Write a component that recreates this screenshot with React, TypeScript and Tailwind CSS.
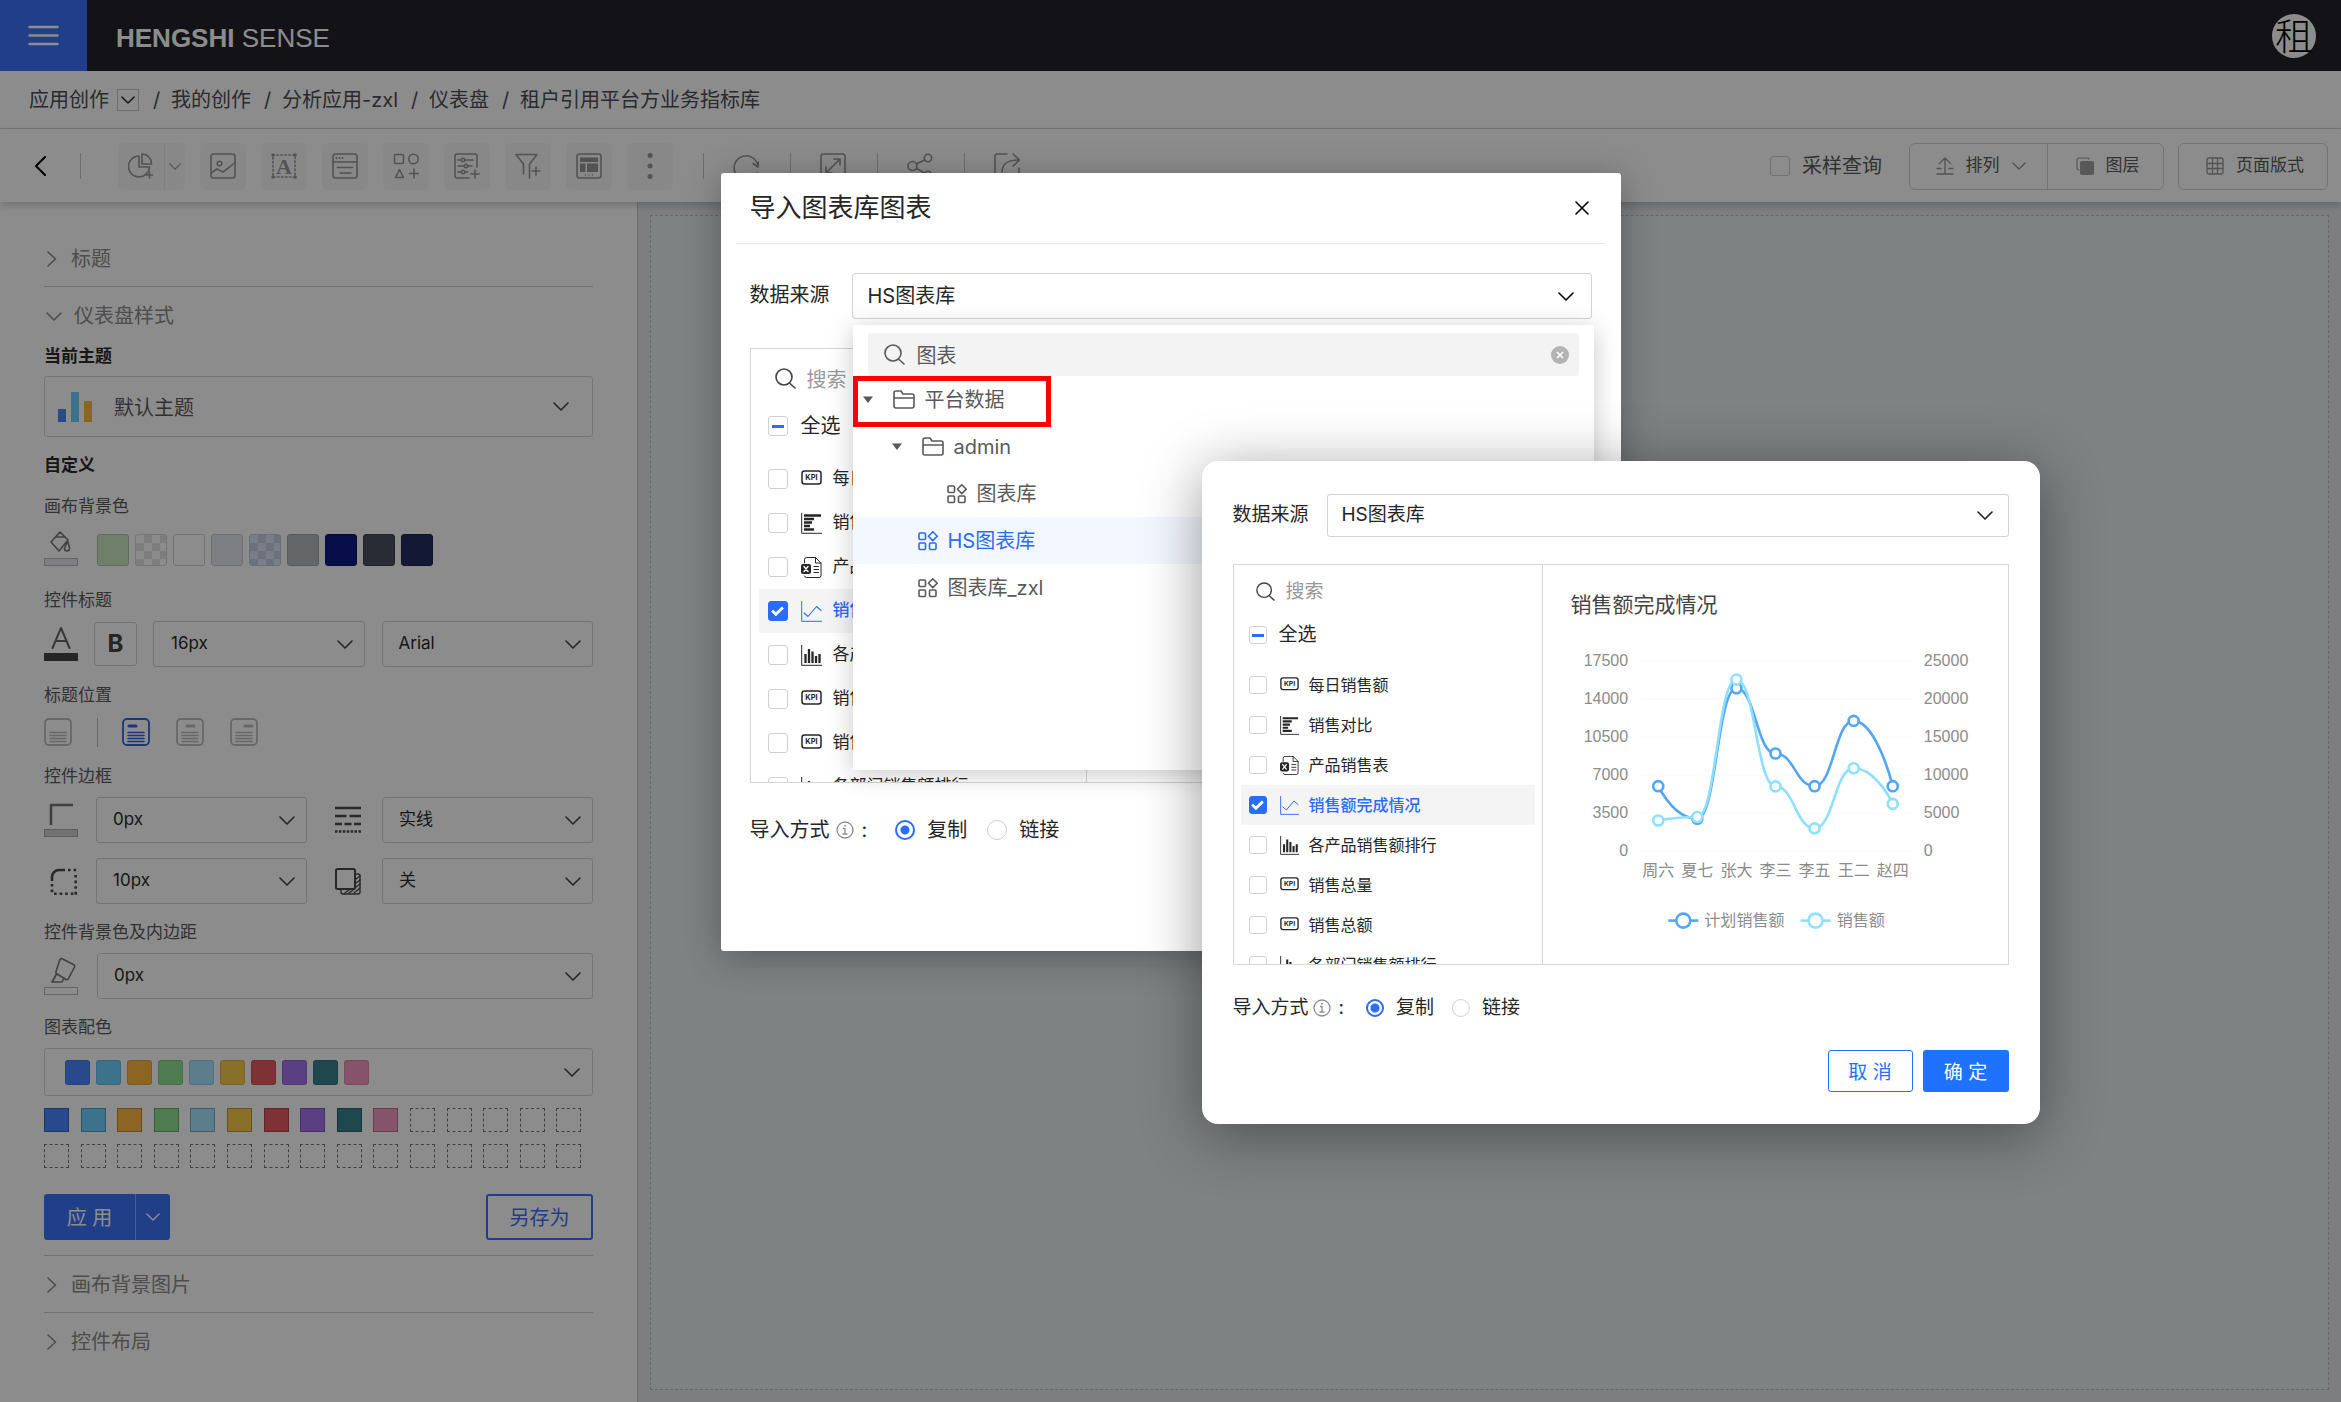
import { useId, type ReactNode } from "react";
import clsx from "clsx";

const PALETTE = [
  "bg-[#4a86ff]",
  "bg-[#6fd0ff]",
  "bg-[#ffb640]",
  "bg-[#8ee091]",
  "bg-[#a7e3ff]",
  "bg-[#f7cc4c]",
  "bg-[#e55b62]",
  "bg-[#a473ee]",
  "bg-[#3a818e]",
  "bg-[#f297c1]",
];

const CHECKER =
  "bg-[repeating-conic-gradient(#0000001c_0_25%,transparent_0_50%)] bg-[length:16px_16px]";

const CANVAS_COLORS = [
  "bg-[#cbe8bf] border-[#a9c69e]",
  `bg-white border-[#d5d5d5] ${CHECKER}`,
  "bg-white border-[#d0d0d0]",
  "bg-[#e3e7ee] border-[#c8ccd2]",
  `bg-[#dde6fa] border-[#c3cbdc] ${CHECKER}`,
  "bg-[#b8babd] border-[#a0a2a5]",
  "bg-[#0e1b85] border-[#0a1565]",
  "bg-[#4d5061] border-[#3c3f4c]",
  "bg-[#242f61] border-[#1b2450]",
];

type ChartKind = "kpi" | "bar" | "sheet" | "line" | "column";

const CHARTS: { name: string; kind: ChartKind; checked?: boolean }[] = [
  { name: "每日销售额", kind: "kpi" },
  { name: "销售对比", kind: "bar" },
  { name: "产品销售表", kind: "sheet" },
  { name: "销售额完成情况", kind: "line", checked: true },
  { name: "各产品销售额排行", kind: "column" },
  { name: "销售总量", kind: "kpi" },
  { name: "销售总额", kind: "kpi" },
  { name: "各部门销售额排行", kind: "column" },
];

/* ---------- icons ---------- */

function Icon({ box, className, children }: { box: string; className: string; children: ReactNode }) {
  return (
    <svg
      viewBox={box}
      className={clsx("shrink-0", className)}
      fill="none"
      stroke="currentColor"
      strokeWidth="1.6"
      strokeLinecap="round"
      strokeLinejoin="round"
      aria-hidden="true"
    >
      {children}
    </svg>
  );
}

function ChevronDown({ className = "w-4 h-[9px]" }: { className?: string }) {
  return (
    <Icon box="0 0 16 9" className={className}>
      <path d="M1 1l7 7 7-7" />
    </Icon>
  );
}

function SearchIcon({ className }: { className: string }) {
  return (
    <Icon box="0 0 21 21" className={className}>
      <circle cx="9" cy="9" r="8" />
      <path d="M15 15.500l5 4.500" />
    </Icon>
  );
}

function FolderIcon() {
  return (
    <Icon box="0 0 22 19" className="h-[19px] w-[22px]">
      <path d="M1 3a2 2 0 0 1 2-2h5l2 3h9a2 2 0 0 1 2 2v10a2 2 0 0 1-2 2H3a2 2 0 0 1-2-2zM1 8h20" />
    </Icon>
  );
}

function LibraryIcon() {
  return (
    <Icon box="0 0 20 20" className="size-5">
      <rect x="1" y="2" width="6.500" height="6.500" rx="1" />
      <rect x="1" y="12" width="6.500" height="6.500" rx="1" />
      <rect x="11.500" y="12" width="6.500" height="6.500" rx="1" />
      <path d="M14.800 0.800l4.400 4.400-4.400 4.400-4.400-4.400z" />
    </Icon>
  );
}

function Caret() {
  return (
    <svg viewBox="0 0 10 7" className="h-[7px] w-[10px] shrink-0" fill="currentColor" aria-hidden="true">
      <path d="M0 .5h10L5 7z" />
    </svg>
  );
}

function InfoIcon() {
  return (
    <Icon box="0 0 18 18" className="size-[18px] text-[#8c8c8c]">
      <circle cx="9" cy="9" r="8" strokeWidth="1.300" />
      <path d="M7.500 7.500H9V13M7 13h4" strokeWidth="1.300" />
      <circle cx="9" cy="4.800" r=".6" fill="currentColor" strokeWidth=".6" />
    </Icon>
  );
}

function ChartIcon({ kind, className }: { kind: ChartKind; className: string }) {
  return (
    <Icon box="0 0 21 21" className={className}>
      {kind === "kpi" && (
        <>
          <rect x="1" y="2" width="19" height="13" rx="2.500" strokeWidth="1.500" />
          <text
            x="10.500"
            y="11.300"
            textAnchor="middle"
            fontSize="7.500"
            fontWeight="700"
            fill="currentColor"
            stroke="none"
          >
            KPI
          </text>
        </>
      )}
      {kind === "bar" && (
        <>
          <path d="M.7 0v20.300H21" strokeWidth="1" />
          <path d="M3 2.500h17M3 6h10M3 9.500h8M3 13h6M3 16.500h10" strokeWidth="2.400" strokeLinecap="butt" />
        </>
      )}
      {kind === "sheet" && (
        <>
          <path d="M3.500 6V2.500a2 2 0 0 1 2-2h9L20 6v12.500a2 2 0 0 1-2 2H5.500a2 2 0 0 1-2-1.500M14.500 .5V6H20M13 9.500h4.500M13 12.500h4.500M13 15.500h4.500" strokeWidth="1" />
          <rect x="0" y="7" width="10" height="10" rx="2" fill="currentColor" stroke="none" />
          <path d="M3 9.500l4 5M7 9.500l-4 5" stroke="#fff" strokeWidth="1.400" />
        </>
      )}
      {kind === "line" && (
        <>
          <path d="M.7 0v20.300H21" strokeWidth="1" />
          <path d="M3 12l4 3.500 8.500-10L20 9.500" strokeWidth="1.100" />
        </>
      )}
      {kind === "column" && (
        <>
          <path d="M.7 0v20.300H21" strokeWidth="1" />
          <path d="M4.500 9v9M8 4v14M11.500 6.500V18M15 11v7M18.500 9v9" strokeWidth="2.300" strokeLinecap="butt" />
        </>
      )}
    </Icon>
  );
}

/* ---------- form controls ---------- */

function Checkbox({
  id,
  label,
  state = "off",
  small,
}: {
  id?: string;
  label?: string;
  state?: "off" | "on" | "mixed";
  small?: boolean;
}) {
  return (
    <span className={clsx("grid shrink-0 place-items-center", small ? "size-[18px]" : "size-5")}>
      <input
        id={id}
        type="checkbox"
        aria-label={label}
        defaultChecked={state === "on"}
        ref={(el) => {
          if (el) el.indeterminate = state === "mixed";
        }}
        className="col-start-1 row-start-1 size-full appearance-none rounded-[3px] border border-[#d0d0d0] checked:border-[#2b6bff] checked:bg-[#2b6bff]"
      />
      {state === "on" && (
        <svg viewBox="0 0 14 11" className="pointer-events-none col-start-1 row-start-1 w-[13px]" fill="none" stroke="#fff" strokeWidth="3" aria-hidden="true">
          <path d="M1.200 5l4 4L12.800 1.500" />
        </svg>
      )}
      {state === "mixed" && <span className="pointer-events-none col-start-1 row-start-1 h-[3px] w-3 bg-[#2b6bff]" />}
    </span>
  );
}

function Select({
  label,
  value,
  id,
  className,
  textClass = "pl-[17px] text-[17px] text-[#2b2b2b]",
  chevronClass = "right-3 text-[#444]",
}: {
  label?: string;
  value: string;
  id?: string;
  className?: string;
  textClass?: string;
  chevronClass?: string;
}) {
  return (
    <div className={clsx("relative", className)}>
      <select
        id={id}
        aria-label={label}
        className={clsx("size-full appearance-none rounded-[3px] border border-[#d4d4d4] bg-transparent", textClass)}
      >
        <option>{value}</option>
      </select>
      <span className={clsx("pointer-events-none absolute inset-y-0 flex items-center", chevronClass)}>
        <ChevronDown />
      </span>
    </div>
  );
}

/* ---------- page chrome ---------- */

function Header() {
  return (
    <header className="flex h-[71px] items-center bg-[#23212a]">
      <button aria-label="菜单" className="flex h-full w-[87px] items-center justify-center bg-[#3c73f9] text-white">
        <svg viewBox="0 0 31 21" className="w-[31px]" stroke="currentColor" strokeWidth="2.500" strokeLinecap="round" aria-hidden="true">
          <path d="M1.500 2h28M1.500 10.500h28M1.500 19h28" />
        </svg>
      </button>
      <h1 className="ml-[29px] pt-1 font-['Liberation_Sans',sans-serif] text-[26px] leading-8 text-white">
        <b>HENGSHI</b> SENSE
      </h1>
      <div className="mr-[25px] ml-auto flex size-11 items-center justify-center rounded-full bg-white text-[38px] leading-none font-light text-black">
        租
      </div>
    </header>
  );
}

function Breadcrumb() {
  const trail = ["我的创作", "分析应用-zxl", "仪表盘", "租户引用平台方业务指标库"];
  return (
    <nav className="flex h-[58px] items-center border-b border-[#d4d4d4] pt-px pl-[29px] text-xl text-[#4d4e55]">
      <a href="#apps">应用创作</a>
      <button aria-label="切换应用" className="mr-px ml-2 flex h-[22px] w-[22px] items-center justify-center border border-[#c8c8c8] text-[#222]">
        <ChevronDown className="h-2 w-3.5" />
      </button>
      {trail.map((item) => (
        <span key={item} className="flex">
          <span className="w-[31px] pl-0.5 text-center">/</span>
          <a href="#crumb">{item}</a>
        </span>
      ))}
    </nav>
  );
}

const TOOLS: { label: string; icon: ReactNode }[] = [
  {
    label: "图片",
    icon: (
      <>
        <rect x="1" y="1" width="24" height="24" rx="2.500" />
        <circle cx="9.500" cy="10.500" r="2.300" />
        <path d="M1 20l6-4 6 3 6-4.500 6-5" />
      </>
    ),
  },
  {
    label: "文本",
    icon: (
      <>
        <path d="M2 2h22v22H2z" strokeDasharray="1.500 2.500" />
        <path d="M2 2h.1M24 2h.1M2 24h.1M24 24h.1" strokeWidth="3.500" />
        <text x="13" y="20.500" textAnchor="middle" fontFamily="Liberation Serif, serif" fontWeight="700" fontSize="22" fill="currentColor" stroke="none">
          A
        </text>
      </>
    ),
  },
  {
    label: "容器",
    icon: (
      <>
        <rect x="1" y="1" width="24" height="24" rx="2.500" />
        <path d="M1 9h24M5.500 14.500h15M8 20h11" />
        <path d="M4.500 5h.1M7.500 5h.1M10.500 5h.1" strokeWidth="2" />
      </>
    ),
  },
  {
    label: "形状",
    icon: (
      <>
        <rect x="1.500" y="1.500" width="9" height="9" rx="1" />
        <circle cx="20.500" cy="6" r="4.700" />
        <path d="M6.500 16.500l4 8h-8zM21 16v9M16.500 20.500h9" />
      </>
    ),
  },
  {
    label: "筛选面板",
    icon: (
      <>
        <path d="M15 25H3a2 2 0 0 1-2-2V3a2 2 0 0 1 2-2h18a2 2 0 0 1 2 2v11" />
        <circle cx="9" cy="7" r="1.700" />
        <circle cx="12" cy="13" r="1.700" />
        <circle cx="9" cy="19" r="1.700" />
        <path d="M4 7h3M11 7h8M4 13h6M14 13h4M4 19h3M11 19h3M21 17v8M17 21h8" />
      </>
    ),
  },
  {
    label: "过滤器",
    icon: <path d="M8.500 21V11L1 1.500h21L14.500 11v14M21 14v8M17 18h8" />,
  },
  {
    label: "布局",
    icon: (
      <>
        <rect x="1" y="1" width="24" height="24" rx="2.500" />
        <path d="M4 4.500h18V9H4zM4 10.500h5.500V19H4zM11 10.500h11V19H11z" fill="currentColor" stroke="none" />
        <path d="M9.500 22h.1M13 22h.1M16.500 22h.1" strokeWidth="1.300" />
      </>
    ),
  },
  {
    label: "更多",
    icon: <path d="M13 2.500h.1M13 13h.1M13 23.500h.1" strokeWidth="5" />,
  },
];

const ACTIONS: { label: string; icon: ReactNode }[] = [
  { label: "刷新", icon: <path d="M24 20A12 12 0 1 1 25 13M25 14l-5-3.500M25 14l.500-5" /> },
  {
    label: "全屏",
    icon: (
      <>
        <rect x="1" y="1" width="24" height="24" rx="2.500" />
        <path d="M6 20L20 6M14 6h6v6M6 14v6h6" />
      </>
    ),
  },
  {
    label: "分享",
    icon: (
      <>
        <circle cx="5.500" cy="13" r="4.500" />
        <circle cx="21" cy="5" r="3.700" />
        <circle cx="21" cy="22" r="3.700" />
        <path d="M9.500 11l8-4M9.500 15.500l8 4.500" />
      </>
    ),
  },
  {
    label: "导出",
    icon: <path d="M13 1H3a2 2 0 0 0-2 2v20a2 2 0 0 0 2 2h20a2 2 0 0 0 2-2v-8M8 19c0-7 5-12 16-12M19 1l6.500 6L19 13" />,
  },
];

function ToolbarDivider({ className }: { className: string }) {
  return <span className={clsx("h-[26px] w-px shrink-0 bg-[#c8c8c8]", className)} />;
}

function Toolbar() {
  return (
    <div className="relative flex h-[73px] items-center pt-px pr-[13px] text-[#979797] shadow-[0_3px_8px_rgba(0,0,0,0.2)]">
      <button aria-label="返回" className="ml-[33px] text-black">
        <Icon box="0 0 14 20" className="h-5 w-3.5">
          <path d="M12 1L3 10l9 9" strokeWidth="2" />
        </Icon>
      </button>
      <ToolbarDivider className="mr-[37px] ml-[33px]" />
      <div className="flex h-[47px] rounded-md bg-[#f7f7f7]">
        <button aria-label="图表" className="flex w-[47px] items-center justify-center border-r border-[#e9e9e9]">
          <Icon box="0 0 26 26" className="size-[26px]">
            <path d="M11 3a10.500 10.500 0 1 0 10.500 11H11zM14 1v10h9.500A9.500 9.500 0 0 0 14 1zM21.500 19v6M18.500 22h6" />
          </Icon>
        </button>
        <button aria-label="更多图表" className="flex w-5 items-center justify-center">
          <ChevronDown className="h-[7px] w-3" />
        </button>
      </div>
      <div className="ml-[15px] flex gap-[15px]">
        {TOOLS.map((tool) => (
          <button
            key={tool.label}
            aria-label={tool.label}
            className="flex h-[47px] w-[46px] items-center justify-center rounded-md bg-[#f7f7f7]"
          >
            <Icon box="0 0 26 26" className="size-[26px]">
              {tool.icon}
            </Icon>
          </button>
        ))}
      </div>
      <div className="ml-[30px] flex">
        {ACTIONS.map((action) => (
          <span key={action.label} className="flex w-[87px] items-center">
            <ToolbarDivider className="mr-[29px]" />
            <button aria-label={action.label}>
              <Icon box="0 0 26 26" className="size-[26px]">
                {action.icon}
              </Icon>
            </button>
          </span>
        ))}
      </div>

      <label className="ml-auto flex items-center gap-3 text-xl text-[#5c5c5c]">
        <Checkbox />
        采样查询
      </label>
      <div className="ml-[27px] flex h-[47px] rounded-md border border-[#d4d4d4] text-[17px]">
        <button className="flex w-[138px] items-center justify-center gap-3 border-r border-[#d4d4d4] pl-1 text-[#5c5c5c]">
          <Icon box="0 0 18 18" className="size-[18px] text-[#979797]">
            <path d="M9 17V1M3.500 6.500L9 1l5.500 5.500M1 11.500h4M13 11.500h4M1 17h16" strokeWidth="1.300" />
          </Icon>
          <span>排列</span>
          <ChevronDown className="h-2 w-3.5 text-[#979797]" />
        </button>
        <button className="flex w-[115px] items-center justify-center gap-3 pl-1 text-[#5c5c5c]">
          <Icon box="0 0 18 18" className="size-[18px] text-[#a0a0a0]">
            <path d="M3 13a2 2 0 0 1-2-2V3a2 2 0 0 1 2-2h8a2 2 0 0 1 2 1" strokeWidth="1.200" />
            <rect x="4" y="4" width="14" height="14" rx="2" fill="currentColor" stroke="none" />
          </Icon>
          图层
        </button>
      </div>
      <button className="ml-3.5 flex h-[47px] w-[150px] items-center justify-center gap-3 rounded-md border border-[#d4d4d4] pl-1 text-[17px] text-[#5c5c5c]">
        <Icon box="0 0 18 18" className="size-[18px] text-[#979797]">
          <path d="M3 1h12a2 2 0 0 1 2 2v12a2 2 0 0 1-2 2H3a2 2 0 0 1-2-2V3a2 2 0 0 1 2-2zM6.500 1v16M11.500 1v16M1 6.500h16M1 11.500h16" strokeWidth="1.300" />
        </Icon>
        页面版式
      </button>
    </div>
  );
}

/* ---------- sidebar ---------- */

function SectionToggle({ title, open, border }: { title: string; open?: boolean; border?: boolean }) {
  return (
    <button
      aria-expanded={!!open}
      className={clsx(
        "flex w-full items-center pt-0.5 pl-0.5 text-xl text-[#8c8c8c]",
        border ? "h-[57px] border-b border-[#d0d0d0]" : "h-14",
      )}
    >
      {open ? (
        <ChevronDown className="mr-3 h-[9px] w-4" />
      ) : (
        <Icon box="0 0 10 16" className="mr-3.5 ml-px h-4 w-2.5">
          <path d="M1 1l7.500 7L1 15" />
        </Icon>
      )}
      {title}
    </button>
  );
}

function Field({ title, children }: { title: string; children: ReactNode }) {
  return (
    <section className="mt-[15px]">
      <h3 className="mb-2 text-[17px] leading-[26px] text-[#5c5c5c]">{title}</h3>
      {children}
    </section>
  );
}

// thin colour bar under a style icon
function ColorIcon({ label, bar, children }: { label: string; bar: string; children: ReactNode }) {
  return (
    <button aria-label={label} className="flex w-[34px] flex-col items-center gap-1 text-[#777]">
      {children}
      <span className={clsx("h-2 w-full border", bar)} />
    </button>
  );
}

function TitlePosition({ label, mark, active }: { label: string; mark?: string; active?: boolean }) {
  return (
    <button aria-label={label} className={active ? "text-[#2f63e6]" : "text-[#bdbdbd]"}>
      <Icon box="0 0 28 28" className="size-7">
        <rect x="1" y="1" width="26" height="26" rx="4" strokeWidth="1.800" />
        {mark && <path d={mark} strokeWidth="3" />}
        <path d="M6 14.500h16M6 17.500h16M6 20.500h16M6 23.500h16" strokeWidth="1.600" />
      </Icon>
    </button>
  );
}

function Sidebar() {
  return (
    <aside className="w-[638px] shrink-0 border-r border-[#c8c8c8] pt-7 pr-11 pl-11">
      <SectionToggle title="标题" border />
      <SectionToggle title="仪表盘样式" open />
      <h3 className="mb-[7px] text-[17px] leading-[26px] font-bold text-[#2b2b2b]">当前主题</h3>
      <div className="relative">
        <Select
          label="当前主题"
          value="默认主题"
          className="h-[61px]"
          textClass="pt-0.5 pl-[69px] text-xl text-[#5c5c5c]"
          chevronClass="right-6 text-[#444]"
        />
        <svg viewBox="0 0 36 30" className="pointer-events-none absolute top-4 left-3.5 h-[30px] w-9" aria-hidden="true">
          <path d="M0 17h8v13H0z" fill="#4a86ff" />
          <path d="M13 0h8v30h-8z" fill="#6fd0ff" />
          <path d="M26 9h8v21h-8z" fill="#ffb640" />
        </svg>
      </div>
      <h3 className="mt-[15px] text-[17px] leading-[26px] font-bold text-[#2b2b2b]">自定义</h3>

      <Field title="画布背景色">
        <div className="flex items-end pt-[3px] pb-1.5">
          <ColorIcon label="画布背景色" bar="border-[#bbb] bg-[#e3e7ee]">
            <Icon box="0 0 24 24" className="size-6">
              <path d="M11 2l8 8-9 11L2 12zM6.500 7h10M19 12c-2 3-3.500 5-3.500 6.500a2.500 2.500 0 0 0 5 0c0-2-1-4-1.500-6.500z" />
            </Icon>
          </ColorIcon>
          <div className="ml-[19px] flex gap-1.5">
            {CANVAS_COLORS.map((color) => (
              <button key={color} aria-label="背景色" className={clsx("size-8 rounded-[3px] border", color)} />
            ))}
          </div>
        </div>
      </Field>

      <Field title="控件标题">
        <div className="flex h-[46px] items-center">
          <button aria-label="文字颜色" className="flex w-[34px] flex-col items-center text-[#666]">
            <Icon box="0 0 20 22" className="mb-1 h-[22px] w-5">
              <path d="M1.500 21L10 1l8.500 20M4.500 14h11" strokeWidth="2" />
            </Icon>
            <span className="h-2 w-full bg-[#444]" />
          </button>
          <button aria-label="加粗" className="ml-4 h-11 w-[43px] rounded-[3px] border border-[#d4d4d4] text-2xl leading-none font-bold text-[#444]">
            B
          </button>
          <Select label="字号" value="16px" className="ml-4 h-full flex-1" />
          <Select label="字体" value="Arial" className="ml-[17px] h-full flex-1" textClass="pl-4 text-[17px] text-[#2b2b2b]" />
        </div>
      </Field>

      <Field title="标题位置">
        <div className="flex h-8 items-center">
          <TitlePosition label="无标题" />
          <span className="mr-6 ml-[25px] h-[29px] w-px bg-[#bdbdbd]" />
          <div className="flex gap-[26px]">
            <TitlePosition label="左对齐" mark="M7 8h7" active />
            <TitlePosition label="居中" mark="M11 8h7" />
            <TitlePosition label="右对齐" mark="M15 8h7" />
          </div>
        </div>
      </Field>

      <Field title="控件边框">
        <div className="grid auto-rows-[46px] grid-cols-[52px_1fr_75px_1fr] items-center gap-y-[15px]">
          <ColorIcon label="边框颜色" bar="border-[#aaa] bg-[#cfcfcf]">
            <Icon box="0 0 24 22" className="h-[22px] w-6">
              <path d="M2 22V2h22" strokeWidth="2.600" strokeLinecap="butt" />
            </Icon>
          </ColorIcon>
          <Select label="边框宽度" value="0px" className="h-full" textClass="pl-4 text-[17px] text-[#2b2b2b]" />
          <Icon box="0 0 26 28" className="ml-7 h-7 w-[26px] text-[#4a4a4a]">
            <path d="M0 2h26" strokeWidth="2.500" strokeLinecap="butt" />
            <path d="M0 10h11.500M14.500 10H26" strokeWidth="2.500" strokeLinecap="butt" />
            <path d="M0 18h7M9.500 18h7M19 18h7" strokeWidth="2.500" strokeLinecap="butt" />
            <path d="M0 25.500h26" strokeWidth="2.500" strokeLinecap="butt" strokeDasharray="2.500 1.400" />
          </Icon>
          <Select label="边框样式" value="实线" className="h-full" textClass="pl-4 text-[17px] text-[#2b2b2b]" />

          <Icon box="0 0 27 27" className="ml-1.5 size-[27px] text-[#4a4a4a]">
            <path d="M2 13V9a7 7 0 0 1 7-7h6" strokeWidth="2.600" strokeLinecap="butt" />
            <path d="M18 2h9M25.700 7v20M2 16v11M4 25.700h23" strokeWidth="2.600" strokeLinecap="butt" strokeDasharray="2.600 3" />
          </Icon>
          <Select label="圆角" value="10px" className="h-full" textClass="pl-4 text-[17px] text-[#2b2b2b]" />
          <Icon box="0 0 26 27" className="ml-7 h-[27px] w-[26px] text-[#4a4a4a]">
            <rect x="1" y="1" width="19" height="20" rx="1.500" strokeWidth="2" />
            <path d="M20 6h3a2 2 0 0 1 2 2v16a2 2 0 0 1-2 2H8a2 2 0 0 1-2-2v-3" strokeWidth="1.400" />
            <path d="M21 11l4-3M21 15l4-3M21 19l4-3M19 25l6-5M14 25l4-3M10 25l4-3" strokeWidth="1.400" />
          </Icon>
          <Select label="阴影" value="关" className="h-full" textClass="pl-4 text-[17px] text-[#2b2b2b]" />
        </div>
      </Field>

      <Field title="控件背景色及内边距">
        <div className="flex h-[46px] items-center">
          <ColorIcon label="控件背景色" bar="border-[#bbb] bg-white">
            <Icon box="0 0 26 26" className="ml-1.5 size-[26px]">
              <path d="M10.500 1.500l12 6a2 2 0 0 1 1 2.500l-6 11.500a2 2 0 0 1-2.500 1L6 17a2 2 0 0 1-1-2.500L9 2.500a1.500 1.500 0 0 1 1.500-1zM5.500 17L1 25h10l2-4" />
            </Icon>
          </ColorIcon>
          <Select label="内边距" value="0px" className="ml-[19px] h-full flex-1" textClass="pl-4 text-[17px] text-[#2b2b2b]" />
        </div>
      </Field>

      <Field title="图表配色">
        <button
          aria-label="图表配色"
          aria-haspopup="listbox"
          className="flex h-12 w-full items-center gap-1.5 rounded-[3px] border border-[#d4d4d4] pr-3 pl-5 text-[#444]"
        >
          {PALETTE.map((color) => (
            <span key={color} className={clsx("size-[25px] rounded-[3px] border border-black/10", color)} />
          ))}
          <span className="ml-auto">
            <ChevronDown />
          </span>
        </button>
        <div className="mt-3 grid grid-cols-15 gap-y-3">
          {Array.from({ length: 30 }, (_, i) => (
            <button
              key={i}
              aria-label={`颜色 ${i + 1}`}
              className={clsx(
                "h-6 w-[25px] border",
                PALETTE[i] ? `border-black/25 ${PALETTE[i]}` : "border-dashed border-[#777]",
              )}
            />
          ))}
        </div>
      </Field>

      <div className="mt-[26px] flex h-[46px] justify-between text-xl">
        <div className="flex overflow-hidden rounded-[3px] bg-[#3c73f9] text-white">
          <button className="w-[92px] border-r border-[#82a6ff] pt-0.5">应 用</button>
          <button aria-label="更多应用方式" className="flex w-[34px] items-center justify-center">
            <ChevronDown className="h-2 w-3.5" />
          </button>
        </div>
        <button className="w-[107px] rounded-[3px] border-2 border-[#3c73f9] pt-0.5 text-[#3c73f9]">另存为</button>
      </div>
      <div className="mt-[15px] border-t border-[#d0d0d0]">
        <SectionToggle title="画布背景图片" border />
        <SectionToggle title="控件布局" />
      </div>
    </aside>
  );
}

/* ---------- chart library picker ---------- */

function ChartList({ small }: { small?: boolean }) {
  const uid = useId();
  return (
    <div
      className={clsx(
        "shrink-0 overflow-hidden border-r border-[#d6d6d6] text-[#262626]",
        small ? "w-[309px]" : "w-[336px]",
      )}
    >
      <label className={clsx("flex items-center gap-[11px] text-[#444]", small ? "h-[52px] pl-[22px] text-[19px]" : "h-[59px] pl-6 text-xl")}>
        <SearchIcon className={small ? "size-[19px]" : "size-[21px]"} />
        <input aria-label="搜索" placeholder="搜索" className="w-48 pt-0.5 placeholder:text-[#999]" />
      </label>
      <label className={clsx("flex h-9 items-center", small ? "gap-3 pl-[15px] text-[19px]" : "gap-[13px] pl-[17px] text-xl")}>
        <Checkbox state="mixed" small={small} />
        全选
      </label>
      <ul className={small ? "mt-3 mr-[7px] ml-[7px] text-base" : "mx-2 mt-[13px] text-[17px]"}>
        {CHARTS.map((chart, i) => (
          <li
            key={chart.name}
            className={clsx(
              "flex items-center",
              small ? "h-10 pl-2" : "h-11 pl-[9px]",
              chart.checked && "bg-[#f4f4f5] font-medium text-[#2b6bff]",
            )}
          >
            <Checkbox id={`${uid}-${i}`} state={chart.checked ? "on" : "off"} small={small} />
            <label htmlFor={`${uid}-${i}`} className={clsx("ml-[13px] flex items-center", small ? "gap-2.5" : "gap-[11px]")}>
              <ChartIcon kind={chart.kind} className={small ? "size-[19px]" : "size-[21px]"} />
              {chart.name}
            </label>
          </li>
        ))}
      </ul>
    </div>
  );
}

function ImportMode({ small }: { small?: boolean }) {
  const uid = useId();
  const radio = clsx(
    "appearance-none rounded-full border border-[#d0d0d0] checked:border-2 checked:border-[#2b6bff] checked:bg-[radial-gradient(circle,#2b6bff_4px,transparent_5px)]",
    small ? "size-[18px]" : "size-5",
  );
  return (
    <fieldset className={clsx("flex items-center text-[#262626]", small ? "text-[19px] leading-7" : "text-xl leading-8")}>
      <span>导入方式</span>
      <span className={clsx("mr-2", small ? "ml-1" : "ml-1.5")}>
        <InfoIcon />
      </span>
      <span>:</span>
      <label className={clsx("flex items-center gap-3", small ? "ml-[22px]" : "ml-7")}>
        <input type="radio" name={uid} defaultChecked className={radio} />
        复制
      </label>
      <label className={clsx("flex items-center gap-3", small ? "ml-[18px]" : "ml-5")}>
        <input type="radio" name={uid} className={radio} />
        链接
      </label>
    </fieldset>
  );
}

const NAMES = ["周六", "夏七", "张大", "李三", "李五", "王二", "赵四"];
const SERIES = [
  { name: "计划销售额", color: "#55a5f5", max: 17500, data: [6000, 3000, 15000, 9000, 6000, 12000, 6000], legendX: 125 },
  { name: "销售额", color: "#8fdfff", max: 25000, data: [4070, 4530, 22580, 8540, 3030, 10920, 6250], legendX: 257 },
];

const px = (i: number) => 115 + i * 39;
const py = (v: number, max: number) => 211 - (v / max) * 190;

// flat tangent at every inner point, free tangent at both ends
function smoothPath(data: number[], max: number) {
  return data.reduce((d, v, i) => {
    const x = px(i);
    const y = py(v, max);
    if (i === 0) return `M${x} ${y}`;
    const prevY = py(data[i - 1], max);
    const c1 = i === 1 ? `${x - 32} ${prevY + (y - prevY) * 0.4}` : `${x - 20} ${prevY}`;
    const c2 = i === data.length - 1 ? `${x - 5} ${y - (y - prevY) * 0.3}` : `${x - 19} ${y}`;
    return `${d} C${c1} ${c2} ${x} ${y}`;
  }, "");
}

function SalesChart() {
  return (
    <svg
      viewBox="0 0 464 300"
      className="mt-[19px] w-full font-['Liberation_Sans','Noto_Sans_CJK_SC',sans-serif] text-base"
      fill="#8c8c8c"
      role="img"
      aria-label="销售额完成情况"
    >
      {[0, 1, 2, 3, 4, 5].map((n) => (
        <g key={n}>
          <path d={`M97 ${211 - n * 38}H369`} stroke="#fafafa" />
          <text x="85" y={216 - n * 38} textAnchor="end">
            {n * 3500}
          </text>
          <text x="380" y={216 - n * 38}>
            {n * 5000}
          </text>
        </g>
      ))}
      {NAMES.map((name, i) => (
        <text key={name} x={px(i)} y="235" textAnchor="middle">
          {name}
        </text>
      ))}
      {SERIES.map((s) => (
        <g key={s.name}>
          <path d={smoothPath(s.data, s.max)} fill="none" stroke={s.color} strokeWidth="2.600" />
          {s.data.map((v, i) => (
            <circle key={i} cx={px(i)} cy={py(v, s.max)} r="5" fill="#fff" stroke={s.color} strokeWidth="2.600" />
          ))}
          <path d={`M${s.legendX} 280h30`} stroke={s.color} strokeWidth="2.600" />
          <circle cx={s.legendX + 15} cy="280" r="7" fill="#fff" stroke={s.color} strokeWidth="2.600" />
          <text x={s.legendX + 36} y="285">
            {s.name}
          </text>
        </g>
      ))}
    </svg>
  );
}

const TREE = [
  { name: "平台数据", folder: true, indent: "pl-2.5" },
  { name: "admin", folder: true, indent: "pl-[39px]" },
  { name: "图表库", indent: "pl-[94px]" },
  { name: "HS图表库", indent: "pl-[65px]", selected: true },
  { name: "图表库_zxl", indent: "pl-[65px]" },
];

function SourceDropdown() {
  return (
    <div className="absolute top-[52px] right-[-2px] left-px h-[445px] bg-white pt-2 text-xl shadow-[0_4px_24px_rgba(0,0,0,0.22)]">
      <div className="mx-[15px] flex h-[43px] items-center rounded-[3px] bg-[#f3f3f3] pr-2.5 pl-4 text-[#595959]">
        <SearchIcon className="size-[21px]" />
        <input aria-label="搜索数据来源" defaultValue="图表" className="ml-3 min-w-0 flex-1 pt-0.5" />
        <button aria-label="清空">
          <svg viewBox="0 0 18 18" className="size-[18px]" aria-hidden="true">
            <circle cx="9" cy="9" r="9" fill="#b3b3b3" />
            <path d="M6 6l6 6M12 6l-6 6" stroke="#fff" strokeWidth="1.600" />
          </svg>
        </button>
      </div>
      <ul role="tree">
        {TREE.map((node) => (
          <li
            key={node.name}
            role="treeitem"
            aria-selected={!!node.selected}
            className={clsx(
              "flex h-[47px] items-center",
              node.indent,
              node.selected ? "bg-[#f3f7ff] text-[#2b6bff]" : "text-[#595959]",
            )}
          >
            {node.folder ? (
              <>
                <Caret />
                <span className="mr-2.5 ml-5">
                  <FolderIcon />
                </span>
              </>
            ) : (
              <span className="mr-2.5">
                <LibraryIcon />
              </span>
            )}
            {node.name}
          </li>
        ))}
      </ul>
      <div className="pointer-events-none absolute top-[51px] left-0 h-[51px] w-[198px] border-[5px] border-[#ff0000]" />
    </div>
  );
}

function PreviewDialog() {
  return (
    <section
      aria-label="图表预览"
      className="absolute top-[288px] left-[481px] w-[838px] rounded-2xl bg-white px-[31px] pt-[33px] pb-8 shadow-[0_10px_60px_rgba(0,0,0,0.4)]"
    >
      <div className="flex items-center">
        <label htmlFor="preview-source" className="w-[94px] pb-0.5 text-[19px] leading-7 text-[#262626]">
          数据来源
        </label>
        <Select
          id="preview-source"
          value="HS图表库"
          className="h-[43px] flex-1"
          textClass="pl-3.5 text-[19px] text-[#262626]"
          chevronClass="right-4 text-[#222]"
        />
      </div>
      <div className="mt-[27px] flex h-[401px] overflow-hidden border border-[#d6d6d6]">
        <ChartList small />
        <div className="flex-1 pt-6">
          <h3 className="pl-7 text-[21px] leading-8 text-[#444]">销售额完成情况</h3>
          <SalesChart />
        </div>
      </div>
      <div className="mt-[29px]">
        <ImportMode small />
      </div>
      <div className="mt-7 flex justify-end gap-2.5 text-[19px]">
        <button className="h-[42px] w-[85px] rounded-[3px] border border-[#1f72ff] pt-1 text-[#1f72ff]">取 消</button>
        <button className="h-[42px] w-[86px] rounded-[3px] bg-[#1f72ff] pt-1 text-white">确 定</button>
      </div>
    </section>
  );
}

function ImportDialog() {
  return (
    <div
      role="dialog"
      aria-label="导入图表库图表"
      className="relative mt-[173px] w-[900px] rounded-[3px] bg-white pb-[105px] shadow-[0_6px_36px_rgba(0,0,0,0.3)]"
    >
      <div className="mx-[15px] flex h-[71px] items-center justify-between border-b border-[#e8e8e8] pr-[13px] pl-3.5">
        <h2 className="text-[26px] leading-9 text-[#262626]">导入图表库图表</h2>
        <button aria-label="关闭" className="p-1 text-black">
          <Icon box="0 0 14 14" className="size-3.5">
            <path d="M1 1l12 12M13 1L1 13" />
          </Icon>
        </button>
      </div>
      <div className="px-[29px] pt-[29px]">
        <div className="flex items-center">
          <label htmlFor="import-source" className="w-[102px] pb-0.5 text-xl text-[#262626]">
            数据来源
          </label>
          <div className="relative z-10 flex-1">
            <Select
              id="import-source"
              value="HS图表库"
              className="h-[46px]"
              textClass="pl-[15px] text-xl text-[#262626]"
              chevronClass="right-[18px] text-black"
            />
            <SourceDropdown />
          </div>
        </div>
        <div className="mt-[29px] flex h-[435px] overflow-hidden border border-[#d6d6d6]">
          <ChartList />
        </div>
        <div className="mt-[31px]">
          <ImportMode />
        </div>
      </div>
    </div>
  );
}

export default function App() {
  return (
    <div className="relative flex min-h-screen flex-col bg-white font-['Inter','Noto_Sans_CJK_SC',sans-serif]">
      <Header />
      <Breadcrumb />
      <Toolbar />
      <main className="flex flex-1">
        <Sidebar />
        <div className="flex-1 bg-[#e4e6ea] px-3 pt-[13px] pb-3">
          <div className="h-full border border-dashed border-[#b9bdc0] bg-[#e6edef]" />
        </div>
      </main>

      <div className="absolute inset-0 flex items-start justify-center bg-black/45">
        <div className="relative">
          <ImportDialog />
          <div className="absolute top-[173px] left-0 z-20">
            <PreviewDialog />
          </div>
        </div>
      </div>
    </div>
  );
}
